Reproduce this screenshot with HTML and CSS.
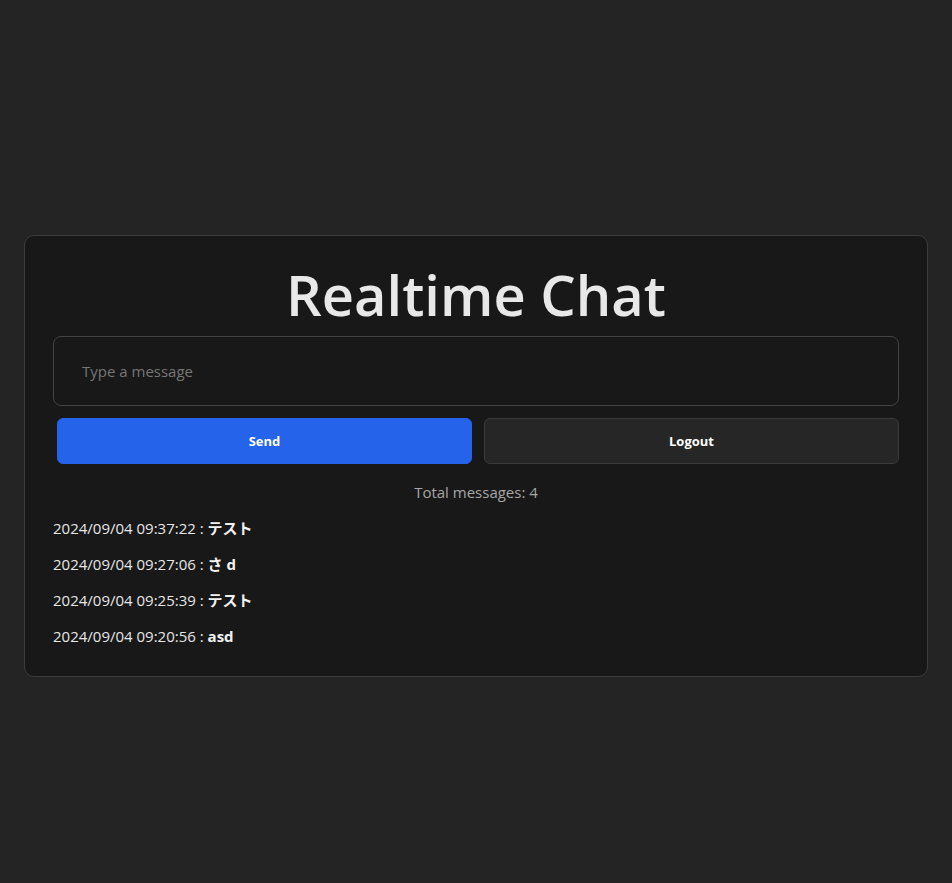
FILE: index.html
```html
<!DOCTYPE html>
<html lang="ja">
<head>
<meta charset="utf-8">
<title>Realtime Chat</title>
<link rel="stylesheet" href="styles.css">
</head>
<body>
<div class="page">
  <div class="card">
    <h1 class="title">Realtime Chat</h1>
    <input class="msg-input" type="text" placeholder="Type a message">
    <div class="actions">
      <button class="btn btn-send">Send</button>
      <button class="btn btn-logout">Logout</button>
    </div>
    <p class="total">Total messages: 4</p>
    <ul class="messages">
      <li class="message">2024/09/04 09:37:22 : <strong>テスト</strong></li>
      <li class="message">2024/09/04 09:27:06 : <strong>さ d</strong></li>
      <li class="message">2024/09/04 09:25:39 : <strong>テスト</strong></li>
      <li class="message">2024/09/04 09:20:56 : <strong>asd</strong></li>
    </ul>
  </div>
</div>
</body>
</html>
```

FILE: styles.css
```css
* { box-sizing: border-box; }
html, body {
  margin: 0;
  padding: 0;
  background: #242424;
}
body {
  font-family: "Open Sans", "Noto Sans CJK JP", sans-serif;
  color: rgba(255, 255, 255, 0.87);
}
.page {
  min-height: 883px;
  display: flex;
  align-items: center;
  justify-content: center;
  padding: 29px 24px 0;
}
.card {
  width: 904px;
  background: #181818;
  border: 1px solid #3c3c3c;
  border-radius: 10px;
  padding: 24px 28px 29px;
  display: flex;
  flex-direction: column;
}
.title {
  margin: 0 0 8px;
  font-size: 56px;
  font-weight: 600;
  line-height: 68px;
  text-align: center;
  color: #e8e8e8;
}
.msg-input {
  width: 100%;
  height: 70px;
  background: #181818;
  border: 1px solid #444;
  border-radius: 8px;
  padding: 0 28px;
  font-family: inherit;
  font-size: 15px;
  color: #ddd;
  outline: none;
}
.msg-input::placeholder { color: #767676; }
.actions {
  display: flex;
  gap: 12px;
  margin-top: 12px;
  padding-left: 4px;
}
.btn {
  flex: 1;
  height: 46px;
  border-radius: 6px;
  font-family: inherit;
  font-size: 13px;
  font-weight: 700;
  color: #fff;
  cursor: pointer;
}
.btn-send {
  background: #2563eb;
  border: 1px solid #2563eb;
}
.btn-logout {
  background: #262626;
  border: 1px solid #3a3a3a;
}
.total {
  margin: 17px 0 0;
  text-align: center;
  font-size: 15px;
  line-height: 22px;
  color: #a6a6a6;
}
.messages {
  list-style: none;
  margin: 14px 0 0;
  padding: 0;
  display: flex;
  flex-direction: column;
  gap: 14px;
}
.message {
  font-size: 15px;
  line-height: 22px;
  color: #e6e6e6;
}
.message strong { font-weight: 700; color: #f2f2f2; }
```
